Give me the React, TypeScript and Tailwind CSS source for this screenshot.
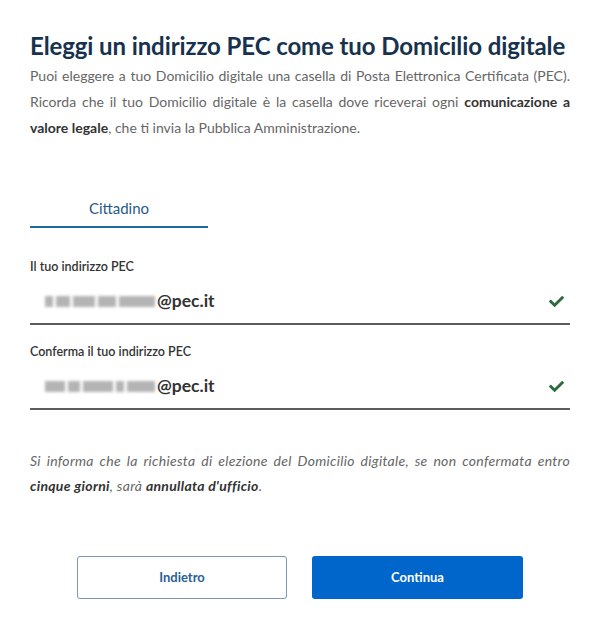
const font = { fontFamily: 'Lato, "Noto Sans", sans-serif' };

function Blurred({ widths }: { widths: number[] }) {
  return (
    <span className="mr-[2px] inline-flex items-center gap-[3px] blur-[1.5px]">
      {widths.map((w, i) => (
        <span key={i} className="inline-block h-[11px] bg-[#b4b4b4]" style={{ width: w }} />
      ))}
    </span>
  );
}

function CheckMark() {
  return (
    <svg viewBox="0 0 512 512" className="h-[15px] w-[15px] fill-[#2e6b3a]">
      <path d="M173.9 439.4L7.5 273c-10-10-10-26.2 0-36.2l36.2-36.2c10-10 26.2-10 36.2 0L192 312.7 432.1 72.6c10-10 26.2-10 36.2 0l36.2 36.2c10 10 10 26.2 0 36.2L210.1 439.4c-10 10-26.2 10-36.2 0z" />
    </svg>
  );
}

function PecField({ label, widths }: { label: string; widths: number[] }) {
  return (
    <div className="flex flex-col">
      <label className="text-[12.5px] font-semibold leading-[16px] text-[#333]">{label}</label>
      <div className="mt-[4px] flex h-[46px] items-center justify-between border-b-2 border-[#5c5c5c] pl-[15px] pr-[6px]">
        <span className="flex items-center text-[17.5px] font-bold text-[#333]">
          <Blurred widths={widths} />
          <span>@pec.it</span>
        </span>
        <CheckMark />
      </div>
    </div>
  );
}

export default function App() {
  return (
    <div className="min-h-[639px] w-[600px] bg-white px-[30px] pt-[30px]" style={font}>
      <h1 className="whitespace-nowrap text-[24px] font-bold leading-[32px] tracking-[-0.1px] text-[#17324d]">
        Eleggi un indirizzo PEC come tuo Domicilio digitale
      </h1>
      <p className="mt-[1px] text-justify text-[14px] leading-[26px] text-[#666]">
        Puoi eleggere a tuo Domicilio digitale una casella di Posta Elettronica Certificata (PEC).
        Ricorda che il tuo Domicilio digitale è la casella dove riceverai ogni{' '}
        <b className="text-[#333]">comunicazione a valore legale</b>, che ti invia la Pubblica
        Amministrazione.
      </p>

      <div className="mt-[57px] flex">
        <div className="w-[178px] border-b-2 border-[#1f6a9a] pb-[8px] text-center text-[15px] leading-[20px] text-[#1f5a8a]">
          Cittadino
        </div>
      </div>

      <div className="mt-[31px] flex flex-col gap-[19px]">
        <PecField label="Il tuo indirizzo PEC" widths={[8, 14, 22, 18, 36]} />
        <PecField label="Conferma il tuo indirizzo PEC" widths={[20, 12, 30, 8, 28]} />
      </div>

      <p className="mt-[38px] text-justify text-[14px] italic leading-[25px] tracking-[0.3px] text-[#666]">
        Si informa che la richiesta di elezione del Domicilio digitale, se non confermata entro{' '}
        <b className="text-[#333]">cinque giorni</b>, sarà <b className="text-[#333]">annullata d'ufficio</b>.
      </p>

      <div className="mt-[58px] flex justify-center gap-[25px]">
        <button className="h-[43px] w-[210px] rounded-[3px] border border-[#7a97b8] bg-white text-[13px] font-bold text-[#2a5f94]">
          Indietro
        </button>
        <button className="h-[43px] w-[211px] rounded-[3px] bg-[#0066cc] text-[13px] font-bold text-white">
          Continua
        </button>
      </div>
    </div>
  );
}
